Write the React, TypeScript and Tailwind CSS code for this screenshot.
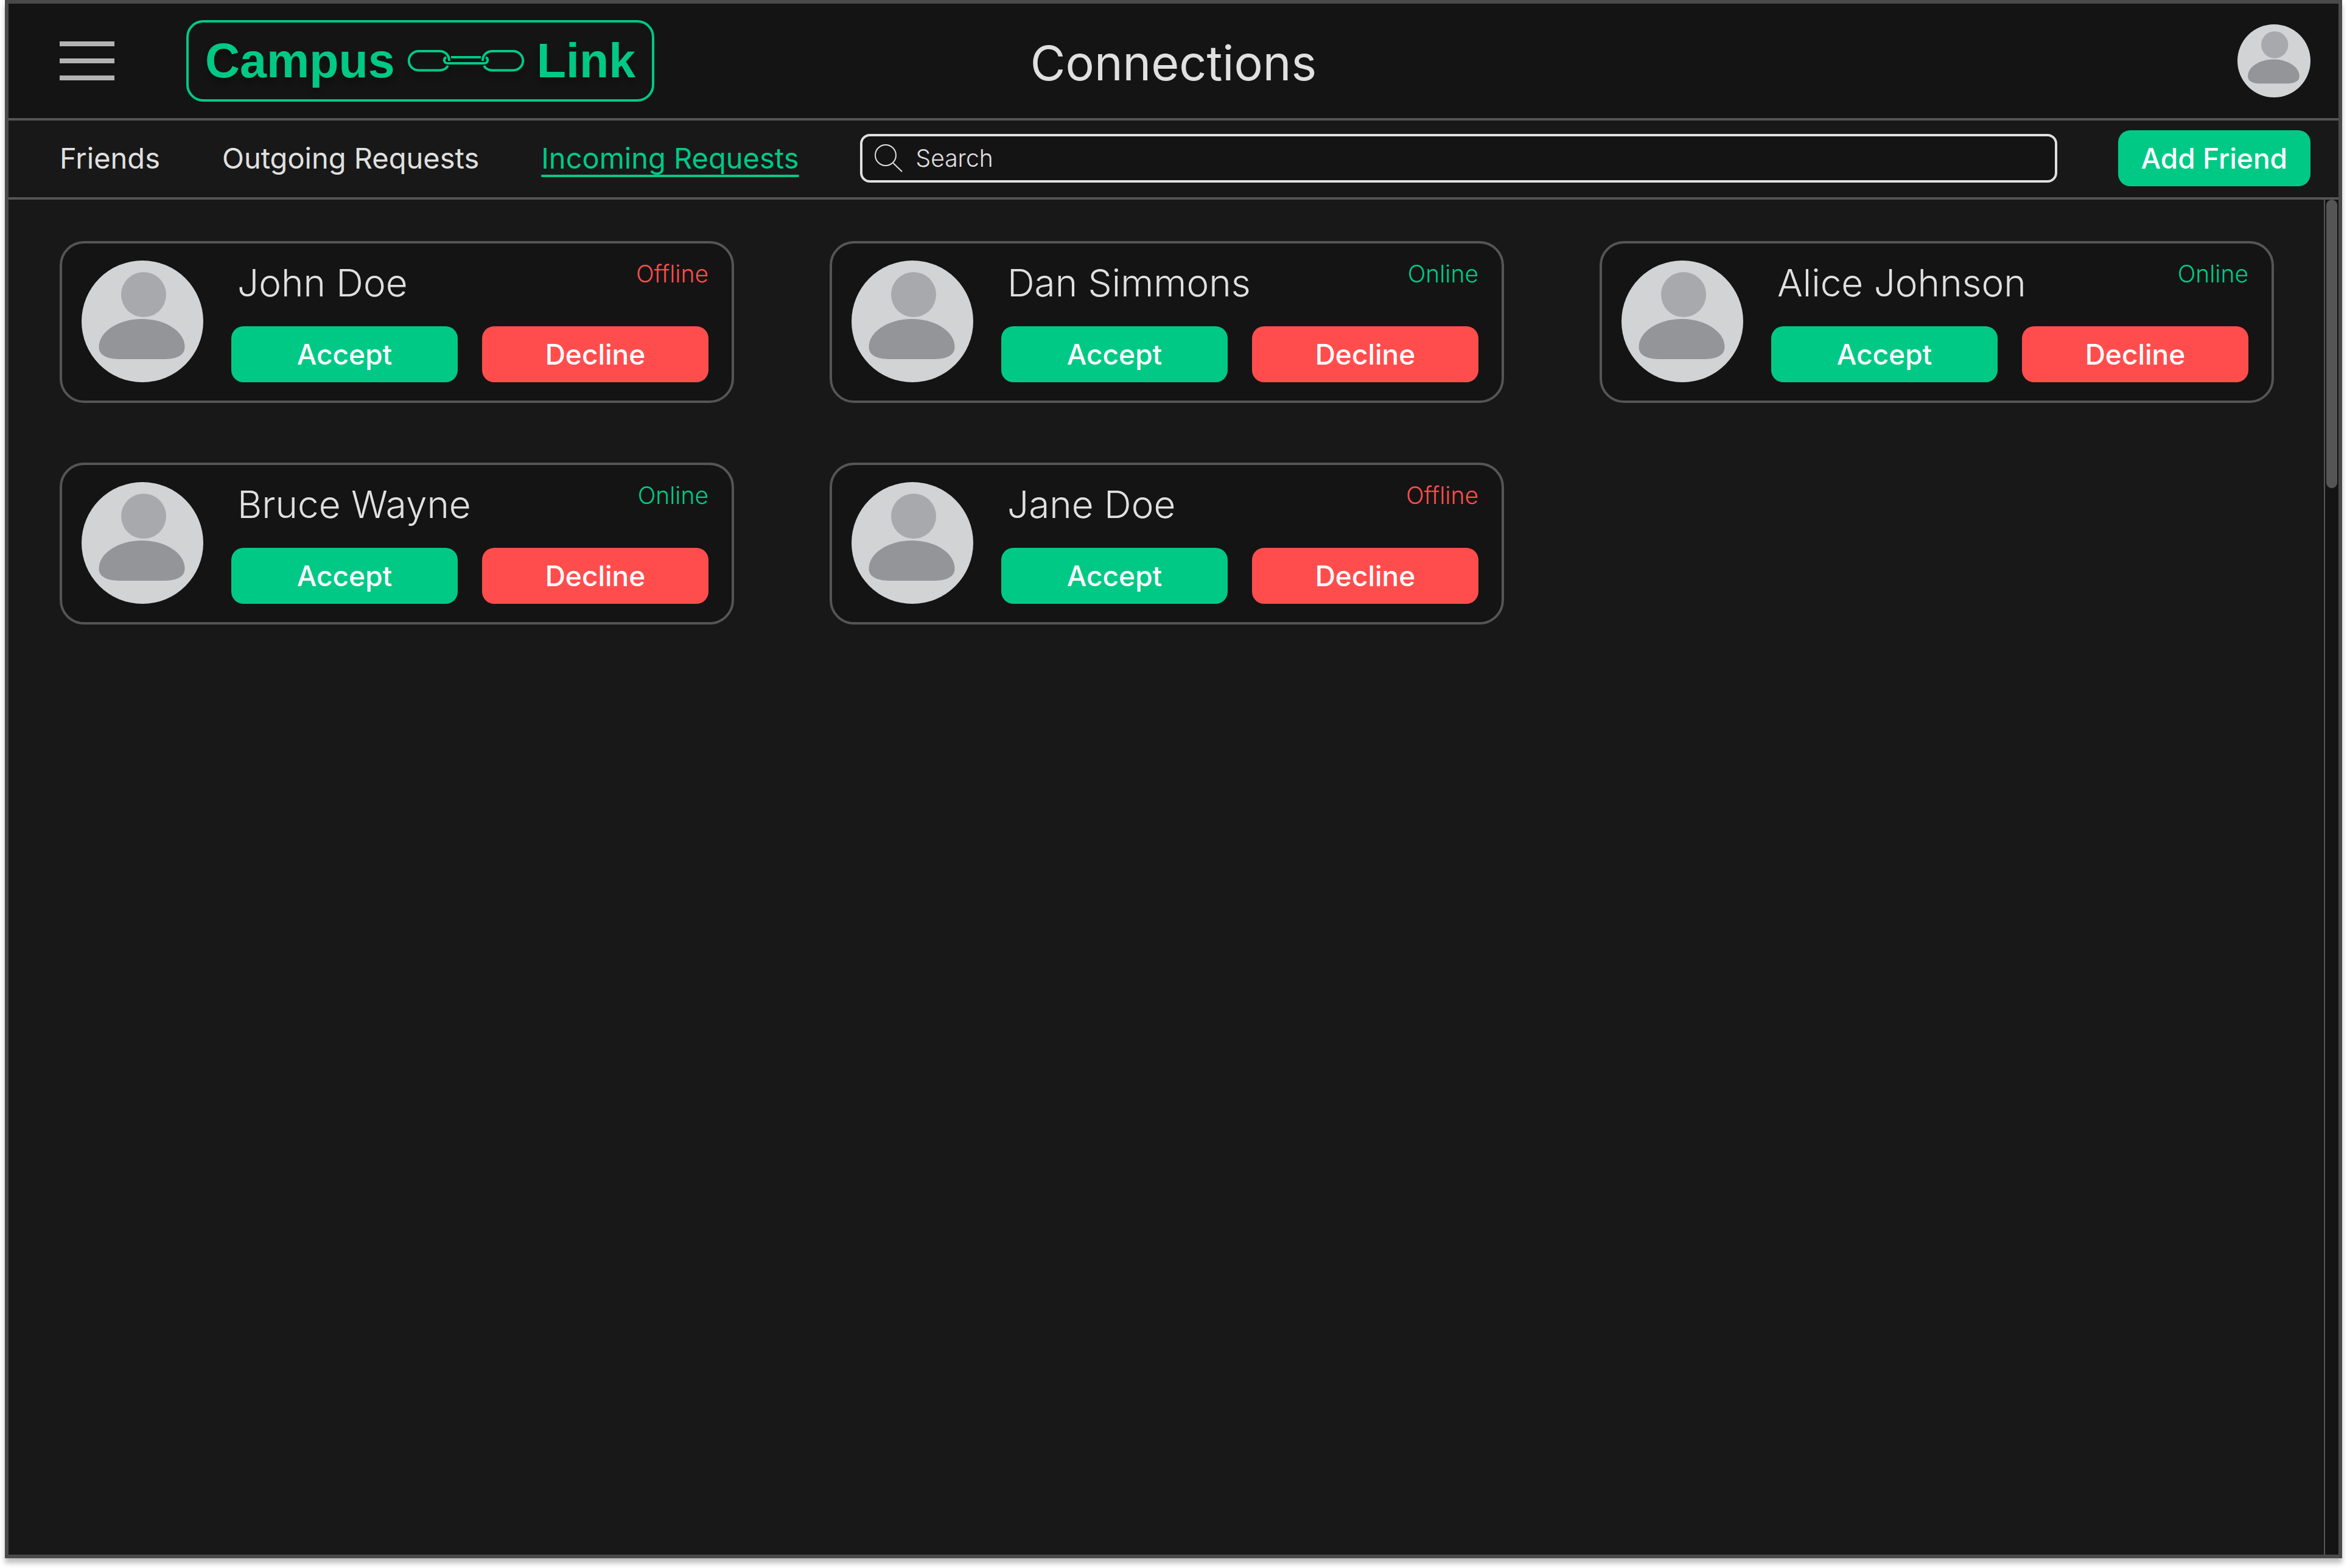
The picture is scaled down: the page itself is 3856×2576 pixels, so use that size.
import { useState } from "react";

type Status = "Online" | "Offline";

const TABS = ["Friends", "Outgoing Requests", "Incoming Requests"];

const REQUESTS: { name: string; status: Status }[] = [
  { name: "John Doe", status: "Offline" },
  { name: "Dan Simmons", status: "Online" },
  { name: "Alice Johnson", status: "Online" },
  { name: "Bruce Wayne", status: "Online" },
  { name: "Jane Doe", status: "Offline" },
];

function Avatar({ className }: { className: string }) {
  return (
    <svg viewBox="0 0 200 200" className={className} aria-hidden="true">
      <circle cx="100" cy="100" r="100" fill="#d1d3d4" />
      <circle cx="102" cy="56" r="37" fill="#a7a9ac" />
      <path
        d="M28.500 142C28.500 117 60 96 99 96S169.500 117 169.500 142C169.500 158 152 162 134 162H64C46 162 28.500 158 28.500 142Z"
        fill="#939598"
      />
    </svg>
  );
}

function ChainIcon() {
  return (
    <svg
      viewBox="0 0 191 36"
      className="h-9 w-[191px] shrink-0 overflow-visible drop-shadow-[0_8px_4px_rgba(0,0,0,0.25)]"
      fill="none"
      stroke="#00c986"
      strokeWidth="4"
      aria-hidden="true"
    >
      <path d="M68 18C68 8 61 2 52 2H18A16 15.500 0 0 0 18 33.500H52C58 33.500 63 31 66 26" />
      <path d="M123 18C123 8 130 2 139 2H173A16 15.500 0 0 1 173 33.500H139C133 33.500 128 31 125 26" />
      <path d="M71 12H120" />
      <path d="M63 12C58 15 59 22 66 22H125C132 22 133 15 128 12" />
    </svg>
  );
}

function Logo() {
  return (
    <a
      href="#"
      className="flex h-[134px] items-center gap-[21px] rounded-[28px] border-4 border-[#00c986] px-[27px] font-['Liberation_Sans',Arial,sans-serif] text-[79px] leading-[90px] font-bold text-[#00c986] [text-shadow:0_8px_8px_rgba(0,0,0,0.25)]"
    >
      <span>Campus</span>
      <ChainIcon />
      <span>Link</span>
    </a>
  );
}

function RequestCard({ name, status }: { name: string; status: Status }) {
  return (
    <li className="flex gap-[46px] rounded-[40px] border-4 border-[#555555] bg-[#141414] pt-7 pr-[38px] pb-[30px] pl-8">
      <Avatar className="size-[200px] shrink-0" />
      <div className="flex min-w-0 flex-1 flex-col justify-between">
        <div className="flex items-start justify-between pl-2.5">
          <h2 className="text-[62px] leading-[74px] font-light">{name}</h2>
          <span
            className={
              status === "Online"
                ? "text-[39px] leading-[44px] font-light text-[#00c986]"
                : "text-[39px] leading-[44px] font-light text-[#ff4d4d]"
            }
          >
            {status}
          </span>
        </div>
        <div className="flex gap-10 text-[46px] font-medium text-white">
          <button type="button" className="h-[92px] flex-1 rounded-[20px] bg-[#00c986]">
            Accept
          </button>
          <button type="button" className="h-[92px] flex-1 rounded-[20px] bg-[#ff4d4d]">
            Decline
          </button>
        </div>
      </div>
    </li>
  );
}

export default function App() {
  const [query, setQuery] = useState("");

  return (
    <div className="flex min-h-screen flex-col bg-white px-2 pb-4 font-['Inter',sans-serif] text-[#e0e0e0]">
      <div className="flex flex-1 flex-col border-[6px] border-[#4a4a4a] bg-[#181818] shadow-[0_8px_8px_rgba(0,0,0,0.25)]">
        <header className="grid h-48 grid-cols-[1fr_auto_1fr] items-center border-b-4 border-[#555555] bg-[#141414]">
          <div className="flex items-center gap-[118px] pl-[84px]">
            <button type="button" aria-label="Menu" className="flex w-[90px] flex-col gap-5">
              <span className="h-2 w-full bg-[#b3b3b3]" />
              <span className="h-2 w-full bg-[#b3b3b3]" />
              <span className="h-2 w-full bg-[#b3b3b3]" />
            </button>
            <Logo />
          </div>
          <h1 className="pt-1.5 text-[79px] leading-[96px]">Connections</h1>
          <button type="button" aria-label="Profile" className="mr-[46px] justify-self-end">
            <Avatar className="size-[120px]" />
          </button>
        </header>

        <div className="flex items-center gap-[100px] border-b-4 border-[#555555] pt-4 pr-[46px] pb-[18px] pl-[84px]">
          <nav className="flex gap-[102px] text-[47px] leading-[60px]">
            {TABS.map((tab) => (
              <a
                key={tab}
                href="#"
                className={
                  tab === "Incoming Requests"
                    ? "whitespace-nowrap text-[#00c986] underline decoration-4 underline-offset-[10px] [text-decoration-skip-ink:none]"
                    : "whitespace-nowrap"
                }
              >
                {tab}
              </a>
            ))}
          </nav>
          <label className="flex h-20 min-w-0 flex-1 items-center gap-[22px] rounded-2xl border-4 border-[#e0e0e0] bg-[#141414] pl-5">
            <svg
              viewBox="0 0 46 46"
              className="size-[46px] shrink-0"
              fill="none"
              stroke="#e0e0e0"
              strokeWidth="2"
              aria-hidden="true"
            >
              <circle cx="18" cy="18" r="17" />
              <path d="M30.500 31 45 45" />
            </svg>
            <input
              type="text"
              aria-label="Search"
              placeholder="Search"
              value={query}
              onChange={(event) => setQuery(event.target.value)}
              className="min-w-0 flex-1 bg-transparent text-[39px] leading-[48px] font-light outline-none placeholder:text-[#e0e0e0]"
            />
          </label>
          <button
            type="button"
            className="h-[92px] rounded-[20px] bg-[#00c986] px-[38px] text-[46px] font-medium whitespace-nowrap text-white"
          >
            Add Friend
          </button>
        </div>

        <div className="flex flex-1">
          <main className="flex-1 pt-[68px] pr-[82px] pb-[68px] pl-[84px]">
            <ul className="grid grid-cols-3 gap-x-[157px] gap-y-[98px]">
              {REQUESTS.map((request) => (
                <RequestCard key={request.name} {...request} />
              ))}
            </ul>
          </main>
          <div className="w-6 border-l-2 border-[#555555] bg-[#141414] px-0.5">
            <div className="h-[474px] rounded-full bg-[#555555]" />
          </div>
        </div>
      </div>
    </div>
  );
}
